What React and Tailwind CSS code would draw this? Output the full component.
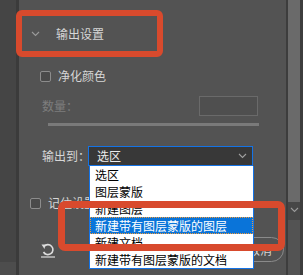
const items = ["选区", "图层蒙版", "新建图层", "新建带有图层蒙版的图层", "新建文档", "新建带有图层蒙版的文档"];

const Chevron = ({ className }) => (
  <svg width="9" height="6" viewBox="0 0 9 6" className={className}>
    <path d="M1 1 L4.5 4.5 L8 1" fill="none" stroke="currentColor" strokeWidth="1.1" />
  </svg>
);

const Checkbox = () => (
  <div className="w-[11px] h-[11px] rounded-[2px] border border-[#8c8c8c] bg-[#4a4a4a]" />
);

export default function App() {
  return (
    <div
      className="relative flex w-[303px] h-[275px] overflow-hidden bg-[#535353] text-[12px] leading-none text-[#d6d6d6]"
      style={{ fontFamily: '"Noto Sans CJK SC", "Noto Sans", sans-serif' }}
    >
      {/* left strip */}
      <div className="flex w-[16px] flex-col">
        <div className="h-[262px] bg-[#454545]" />
        <div className="flex-1 bg-[#4d4d4d]" />
      </div>
      <div className="w-[3px] bg-[#3b3b3b]" />

      {/* main panel */}
      <div className="flex w-[267px] flex-col">
        <div className="mt-[20px] flex h-[28px] items-center pl-[12px]">
          <Chevron className="text-[#9a9a9a]" />
          <span className="ml-[16px]">输出设置</span>
        </div>

        <div className="mt-[20px] flex h-[16px] items-center pl-[21px]">
          <Checkbox />
          <span className="ml-[7px]">净化颜色</span>
        </div>

        <div className="mt-[12px] flex h-[20px] items-center pl-[23px]">
          <span className="whitespace-nowrap text-[#7e7e7e]">数量：</span>
          <div className="ml-auto mr-[28px] h-[20px] w-[59px] border border-[#6a6a6a] bg-[#4f4f4f]" />
        </div>

        <div className="mt-[7px] ml-[29px] h-[3px] w-[211px] bg-[#7a7a7a]" />

        <div className="mt-[20px] flex h-[20px] items-center pl-[23px]">
          <span className="w-[46px] shrink-0 whitespace-nowrap">输出到：</span>
          <div className="flex h-[20px] w-[165px] shrink-0 items-center justify-between border border-[#1473e6] bg-[#383838] pl-[8px] pr-[5px] text-[#ececec]">
            <span>选区</span>
            <Chevron className="text-[#a0a0a0]" />
          </div>
        </div>

        <div className="mt-[29px] flex h-[16px] items-center pl-[11px]">
          <Checkbox />
          <span className="ml-[7px]">记住设置</span>
        </div>

        <div className="mt-[26px] flex h-[25px] items-center pl-[21px]">
          <svg width="16" height="17" viewBox="0 0 16 17" className="text-[#dcdcdc]">
            <path d="M4 5.5 A5 5 0 1 1 3.5 11" fill="none" stroke="currentColor" strokeWidth="1.6" />
            <path d="M1.5 3.5 L5.5 3.5 L4.5 8 Z" fill="currentColor" />
            <path d="M1 16 H15" stroke="currentColor" strokeWidth="1.2" />
          </svg>
          <div className="ml-auto mr-[2px] flex h-[25px] w-[48px] items-center justify-center rounded-full border border-[#8a8a8a]">
            <span>取消</span>
          </div>
        </div>
      </div>

      {/* scrollbar */}
      <div className="flex w-[17px]">
        <div className="w-[2px] bg-[#3d3d3d]" />
        <div className="flex w-[12px] flex-col">
          <div className="h-[202px] bg-[#6a6a6a]" />
          <div className="flex h-[18px] items-start justify-center bg-[#474747] pt-[5px]">
            <Chevron className="text-[#9a9a9a]" />
          </div>
          <div className="flex-1 bg-[#535353]" />
        </div>
        <div className="w-[3px] bg-[#3d3d3d]" />
      </div>

      {/* open dropdown list */}
      <div className="absolute left-[89px] top-[166px] w-[165px] border-x border-b border-[#1473e6] bg-white text-black">
        {items.map((item, i) => (
          <div
            key={item}
            className={
              i === 3
                ? "flex h-[17px] items-center border border-dotted border-[#f29a38] bg-[#0a74d9] pl-[4px] text-white"
                : "flex h-[17px] items-center pl-[5px]"
            }
          >
            {item}
          </div>
        ))}
      </div>

      {/* annotation boxes */}
      <div className="absolute left-[16px] top-[10px] h-[47px] w-[147px] rounded-[6px] border-[6px] border-[#d84a2d]" />
      <div className="absolute left-[58px] top-[201px] h-[50px] w-[227px] rounded-[7px] border-[7px] border-[#d84a2d]" />
    </div>
  );
}
